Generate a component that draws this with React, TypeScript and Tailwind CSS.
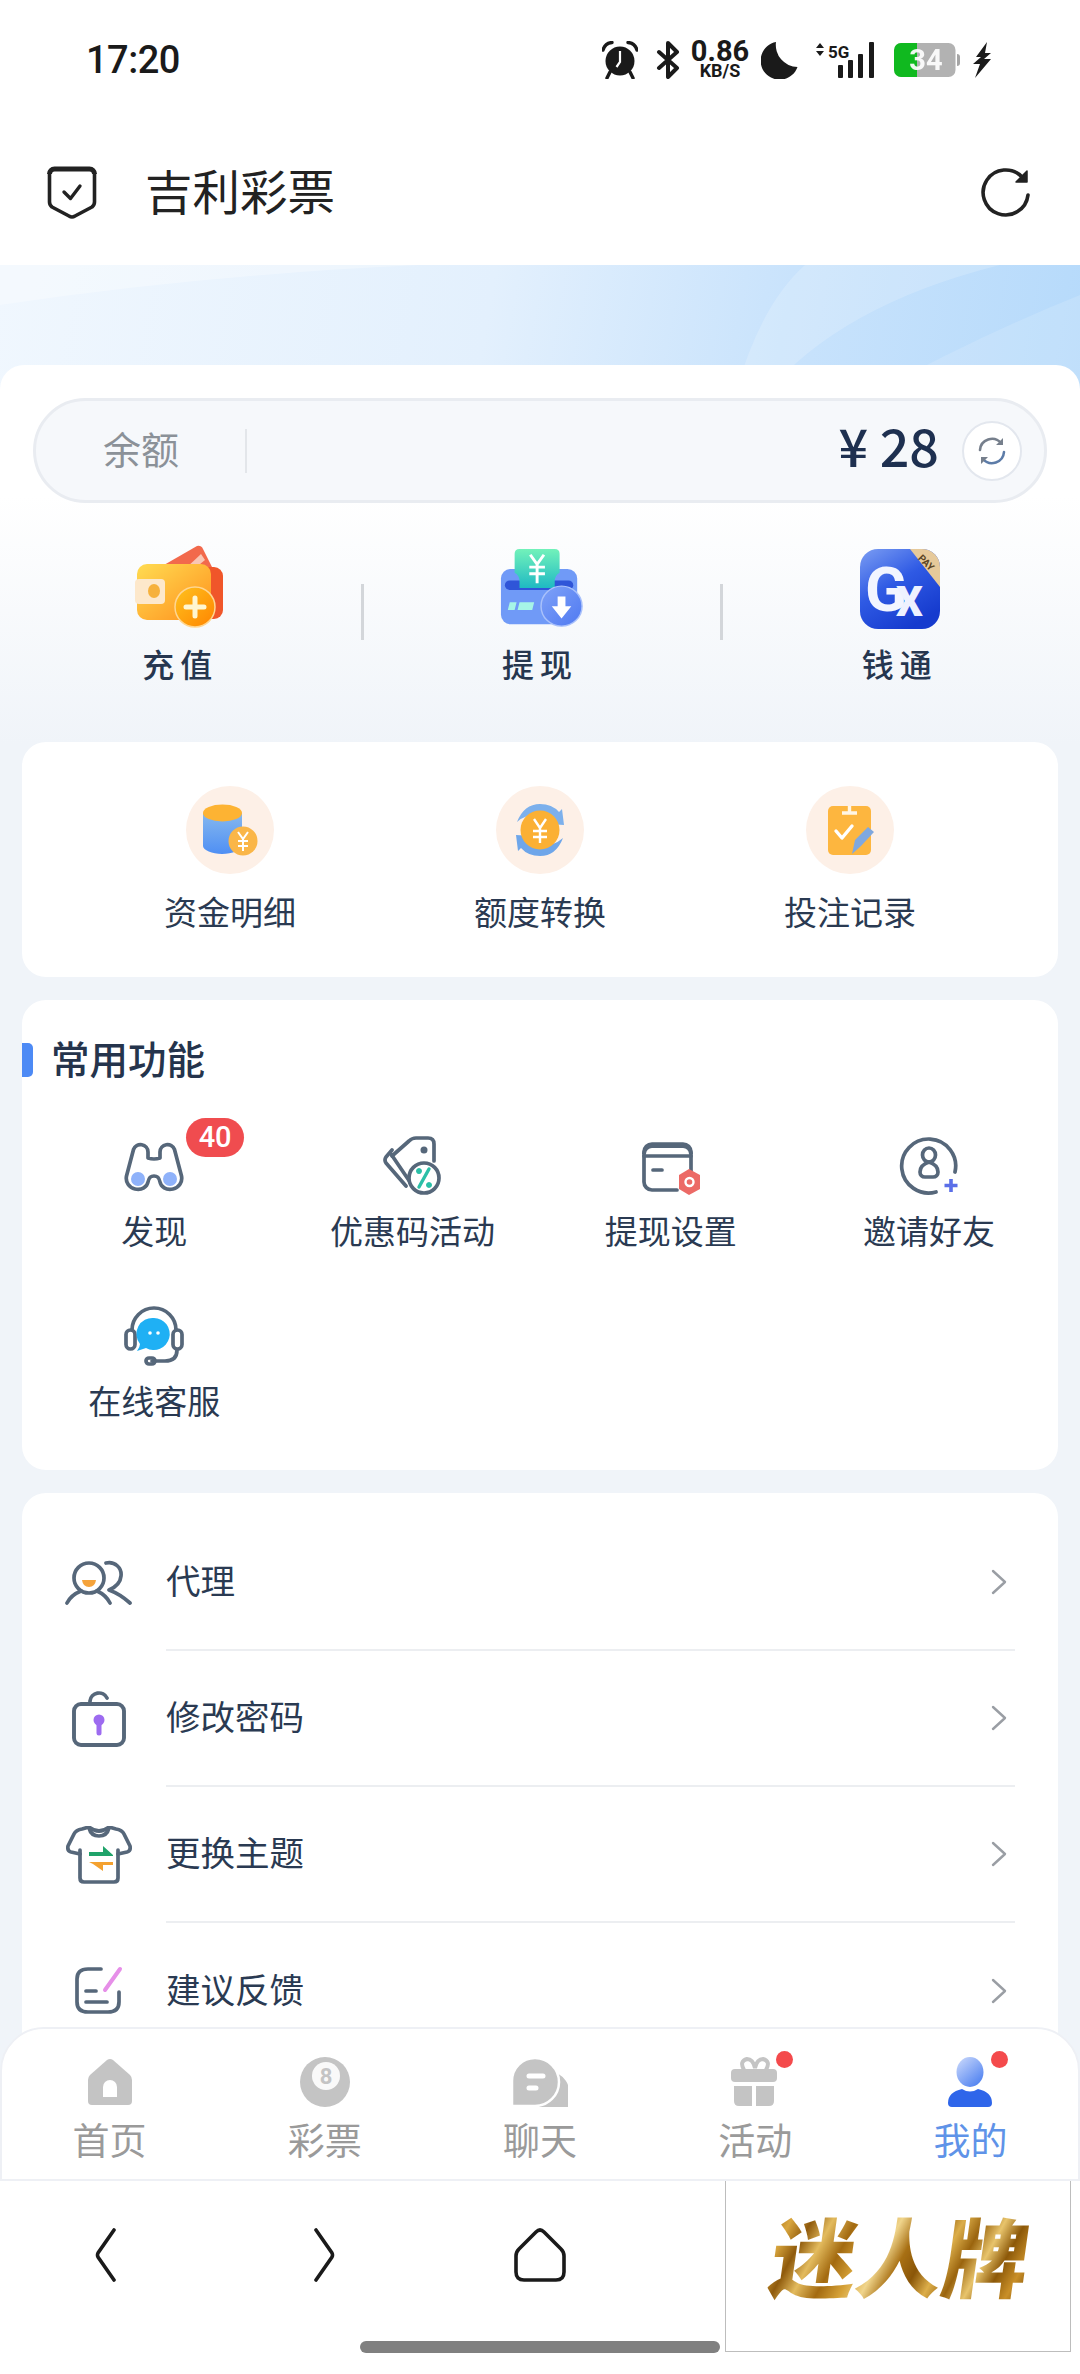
import React from "react";

const CJK = "font-['Noto_Sans_CJK_SC','Noto_Sans',sans-serif]";

function Alarm() {
  return (
    <svg width="36" height="38" viewBox="0 0 36 38">
      <circle cx="18" cy="20" r="14.5" fill="#1a1a1a" />
      <path d="M18 10v11l-3.5 5" stroke="#fff" strokeWidth="2.2" fill="none" />
      <path d="M1 9 Q3 2 10 1.5" stroke="#1a1a1a" strokeWidth="3.4" fill="none" strokeLinecap="round" />
      <path d="M35 9 Q33 2 26 1.5" stroke="#1a1a1a" strokeWidth="3.4" fill="none" strokeLinecap="round" />
      <path d="M8 31l-3 6M28 31l3 6" stroke="#1a1a1a" strokeWidth="3.4" strokeLinecap="round" />
    </svg>
  );
}

function Bluetooth() {
  return (
    <svg width="24" height="38" viewBox="0 0 24 38">
      <path d="M3 11l18 16-9 9V2l9 9L3 27" stroke="#1a1a1a" strokeWidth="4" fill="none" strokeLinejoin="round" strokeLinecap="round" />
    </svg>
  );
}

function Moon() {
  return (
    <svg width="37" height="38" viewBox="0 0 37 38">
      <path d="M15 1A19 19 0 1 0 36.500 26 A22 22 0 0 1 15 1z" fill="#1a1a1a" />
    </svg>
  );
}

function Signal() {
  return (
    <svg width="59" height="38" viewBox="0 0 59 38">
      <path d="M0 7l4-5 4 5zM0 10h8l-4 5z" fill="#1a1a1a" />
      <text x="12" y="17" fontSize="17" fontWeight="700" fontFamily="Roboto, sans-serif" fill="#1a1a1a">5G</text>
      <rect x="22" y="24" width="5" height="13" rx="1" fill="#1a1a1a" />
      <rect x="32" y="19" width="5" height="18" rx="1" fill="#1a1a1a" />
      <rect x="42" y="13" width="5" height="24" rx="1" fill="#1a1a1a" />
      <rect x="53" y="1" width="5" height="36" rx="1" fill="#1a1a1a" />
    </svg>
  );
}

function Battery() {
  return (
    <svg width="66" height="36" viewBox="0 0 66 36">
      <rect x="0.500" y="1" width="61" height="34" rx="7" fill="#b2b2b2" />
      <path d="M7 1h16v34H7a7 7 0 0 1-7-7V8a7 7 0 0 1 7-7z" fill="#10b91f" />
      <path d="M63 12a3 3 0 0 1 3 3v6a3 3 0 0 1-3 3z" fill="#a5a5a5" />
      <text x="32" y="28" textAnchor="middle" fontSize="29" fontWeight="700" fontFamily="Roboto, sans-serif" fill="#fff" opacity="0.92">34</text>
    </svg>
  );
}

function Bolt() {
  return (
    <svg width="20" height="36" viewBox="0 0 20 36">
      <path d="M15 0L4 15h5L1 22h7L3 36 19 17h-7l7-6h-6l2-11z" fill="#1a1a1a" />
    </svg>
  );
}

function StatusBar() {
  return (
    <div className="flex h-[120px] items-center justify-between bg-white pl-[86px] pr-[88px]">
      <span className="font-['Roboto',sans-serif] text-[38px] font-medium tracking-[-0.5px] text-[#1a1a1a]">17:20</span>
      <div className="flex items-center">
        <Alarm />
        <div className="ml-[18px]"><Bluetooth /></div>
        <div className="mb-[2px] ml-[9px] flex w-[62px] flex-col items-center font-['Roboto',sans-serif] font-bold text-[#1a1a1a]">
          <span className="text-[29px] leading-[23px]">0.86</span>
          <span className="text-[18px] leading-[15px]">KB/S</span>
        </div>
        <div className="ml-[10px]"><Moon /></div>
        <div className="ml-[18px]"><Signal /></div>
        <div className="ml-[19px]"><Battery /></div>
        <div className="ml-[12px]"><Bolt /></div>
      </div>
    </div>
  );
}

function Header() {
  return (
    <div className="flex h-[145px] items-center justify-between bg-white pl-[47px] pr-[48px]">
      <div className="flex items-center gap-[48px]">
        <svg width="50" height="54" viewBox="0 0 50 54">
          <path d="M2.500 8a5 5 0 0 1 5-5h35a5 5 0 0 1 5 5v28q0 3-2.500 5L28 50q-3 2-6 0L5 41q-2.500-2-2.500-5z" fill="none" stroke="#222" strokeWidth="3.600" strokeLinejoin="round" />
          <path d="M2.500 8a5 5 0 0 1 5-5h35a5 5 0 0 1 5 5" fill="none" stroke="#222" strokeWidth="5" />
          <path d="M17 26l6.500 6.500L33 20" fill="none" stroke="#222" strokeWidth="3.400" strokeLinecap="round" strokeLinejoin="round" />
        </svg>
        <span className={`${CJK} mb-[6px] text-[47.5px] leading-[60px] text-[#222]`}>吉利彩票</span>
      </div>
      <svg width="52" height="52" viewBox="0 0 52 52">
        <path d="M48 28A22.500 22.500 0 1 1 42 10" fill="none" stroke="#222" strokeWidth="3.600" strokeLinecap="round" />
        <path d="M47 4v11H36z" fill="#222" stroke="#222" strokeWidth="1.500" strokeLinejoin="round" />
      </svg>
    </div>
  );
}

function Banner() {
  return (
    <div className="h-[130px] overflow-hidden bg-[linear-gradient(100deg,#f0f7fe_0%,#e3f0fd_45%,#c9e3fc_72%,#b6dafb_100%)]">
      <svg width="1080" height="130" viewBox="0 0 1080 130">
        <path d="M735 130 Q760 40 805 0 L1000 0 Q840 40 765 130z" fill="#ffffff" opacity="0.18" />
        <path d="M870 130 Q980 70 1080 30 V130z" fill="#ffffff" opacity="0.14" />
        <path d="M0 40 Q200 10 420 0 H0z" fill="#ffffff" opacity="0.3" />
      </svg>
    </div>
  );
}

function Wallet() {
  return (
    <svg width="88" height="84" viewBox="0 0 88 84" className="mr-[6px]">
      <defs>
        <linearGradient id="wa" x1="0" y1="0" x2="1" y2="1"><stop offset="0" stopColor="#ffdc52" /><stop offset="1" stopColor="#ff8f1c" /></linearGradient>
        <linearGradient id="wb" x1="0" y1="0" x2="1" y2="1"><stop offset="0" stopColor="#ffc21e" /><stop offset="1" stopColor="#ff8400" /></linearGradient>
      </defs>
      <path d="M22 24L62 1q4-1 6 3l10 20z" fill="#f2694c" />
      <path d="M50 24L66 9l4 6-11 9z" fill="#f9c6b4" />
      <rect x="64" y="22" width="24" height="52" rx="9" fill="#f0562a" />
      <rect x="2" y="19" width="74" height="56" rx="10" fill="url(#wa)" />
      <rect x="0" y="34" width="30" height="25" rx="4" fill="#fde8cb" />
      <ellipse cx="19" cy="46" rx="6" ry="7" fill="#f6b13c" />
      <circle cx="60" cy="62" r="20" fill="url(#wb)" stroke="#ffd691" strokeWidth="1.500" />
      <path d="M60 53v18M51 62h18" stroke="#fff6d0" strokeWidth="5" strokeLinecap="round" />
    </svg>
  );
}

function Withdraw() {
  return (
    <svg width="86" height="80" viewBox="0 0 88 84" preserveAspectRatio="none">
      <defs>
        <linearGradient id="wd" x1="0" y1="0" x2="0" y2="1"><stop offset="0" stopColor="#72f2ba" /><stop offset="1" stopColor="#1fb9c3" /></linearGradient>
        <linearGradient id="wc" x1="0" y1="0" x2="1" y2="1"><stop offset="0" stopColor="#7fa2f8" /><stop offset="1" stopColor="#4f79f1" /></linearGradient>
      </defs>
      <rect x="2" y="21" width="78" height="58" rx="10" fill="#709af7" />
      <rect x="6" y="33" width="70" height="10" rx="5" fill="#2f55d8" />
      <path d="M16 5q0-5 5-5h36q5 0 5 5v20q-5 3-5 9v7H21v-7q0-6-5-9z" fill="url(#wd)" />
      <path d="M32 6l7 10 7-10M39 16v20M31 19h16M31 26h16" stroke="#fff" strokeWidth="3" fill="none" />
      <path d="M11 56h7l-2 8H9zM21 56h15l-2 8H19z" fill="#a6f5e7" />
      <circle cx="64" cy="60" r="21" fill="url(#wc)" stroke="#a9c1fb" strokeWidth="1.500" />
      <path d="M60 50h8v10h6L64 73 54 60h6z" fill="#fff" />
    </svg>
  );
}

function QianTong() {
  return (
    <svg width="80" height="80" viewBox="0 0 80 80" className="mr-[4px]">
      <defs>
        <linearGradient id="qt" x1="0" y1="0" x2="0.600" y2="1"><stop offset="0" stopColor="#7b9df3" /><stop offset="0.500" stopColor="#2f5ae4" /><stop offset="1" stopColor="#163bce" /></linearGradient>
      </defs>
      <rect width="80" height="80" rx="18" fill="url(#qt)" />
      <path d="M50 0h12a18 18 0 0 1 18 18v20z" fill="#e6c99a" />
      <text x="66" y="17" textAnchor="middle" fontSize="10" fontWeight="700" fontFamily="Roboto, sans-serif" fill="#5b4423" transform="rotate(45 66 14)">PAY</text>
      <text x="5" y="62" fontSize="62" fontWeight="700" fontFamily="Roboto, sans-serif" fill="#f2f5ff">G</text>
      <text x="36" y="67" fontSize="42" fontWeight="900" fontFamily="Roboto, sans-serif" fill="#eef2ff">X</text>
    </svg>
  );
}

function Funds() {
  return (
    <svg width="88" height="88" viewBox="0 0 88 88">
      <defs>
        <linearGradient id="fa" x1="0" y1="0" x2="0" y2="1"><stop offset="0" stopColor="#86b8ee" /><stop offset="1" stopColor="#4f8ff4" /></linearGradient>
      </defs>
      <circle cx="44" cy="44" r="44" fill="#fdf0e7" />
      <path d="M17 27v33c0 4 9 8 19 8s20-4 20-8V27z" fill="url(#fa)" />
      <ellipse cx="36.500" cy="27" rx="19.500" ry="8.500" fill="#fdb333" />
      <circle cx="57" cy="55" r="14.500" fill="#fab648" />
      <path d="M52 46l5 7 5-7M57 53v12M52 55h10M52 60h10" stroke="#fff" strokeWidth="2" fill="none" />
    </svg>
  );
}

function Exchange() {
  return (
    <svg width="88" height="88" viewBox="0 0 88 88">
      <circle cx="44" cy="44" r="44" fill="#fdf0e7" />
      <path d="M21 36Q28 18 44 18q12 0 19 8l3-3 2 16-16-1 4-4q-4-6-12-6-14 0-23 8z" fill="#7cb0ec" />
      <path d="M67 52Q60 70 44 70q-12 0-19-8l-3 3-2-16 16 1-4 4q4 6 12 6 14 0 23-8z" fill="#6ea6ea" />
      <circle cx="44" cy="44" r="19.500" fill="#fbb034" />
      <path d="M38 33l6 9 6-9M44 42v15M37 45h14M37 51h14" stroke="#fff" strokeWidth="2.400" fill="none" />
    </svg>
  );
}

function Record() {
  return (
    <svg width="88" height="88" viewBox="0 0 88 88">
      <circle cx="44" cy="44" r="44" fill="#fdf0e7" />
      <rect x="22" y="20" width="43" height="49" rx="5" fill="#fdb63f" />
      <path d="M36 27h15M43.500 20v7" stroke="#fff6e6" strokeWidth="3.400" />
      <path d="M30 45l6 7 10-12" stroke="#fff" strokeWidth="3.400" fill="none" strokeLinecap="round" strokeLinejoin="round" />
      <path d="M46 68l3-14 13-13 6 5-13 14z" fill="#7fa8df" />
    </svg>
  );
}

const stroke = { fill: "none", stroke: "#56677a", strokeWidth: 3.7, strokeLinecap: "round", strokeLinejoin: "round" } as const;

function Binoculars() {
  return (
    <svg width="60" height="60" viewBox="0 0 60 60">
      <path {...stroke} d="M24 22v-6A7.500 7.500 0 0 0 9.500 13.500L2.500 40a11 11 0 0 0 8.500 13c7 1.500 12-2 13-7 .8-4 2-6 6-6s5.200 2 6 6c1 5 6 8.500 13 7a11 11 0 0 0 8.500-13L50.500 13.500A7.500 7.500 0 0 0 36 16v6q-6 2-12 0z" />
      <circle cx="14" cy="43" r="7" fill="#8fb2fa" />
      <circle cx="46" cy="43" r="7" fill="#8fb2fa" />
    </svg>
  );
}

function Tag() {
  return (
    <svg width="60" height="60" viewBox="0 0 60 60">
      <path {...stroke} d="M24 50L4 27q-2-3 0-6l6-7" />
      <path {...stroke} d="M10 20L27 5q3-3 7-3h12q6 0 6 6v17" />
      <path {...stroke} d="M9 18l19 28" />
      <circle cx="42" cy="14" r="3.500" fill="#56677a" />
      <circle {...stroke} cx="42" cy="42" r="15" fill="#fff" />
      <path d="M37 33a2 2 0 1 0 .01 0M47 47a2 2 0 1 0 .01 0" fill="#2bbfa7" stroke="#2bbfa7" strokeWidth="2" />
      <path d="M47 33L37 51" stroke="#2bbfa7" strokeWidth="3.400" strokeLinecap="round" />
    </svg>
  );
}

function CardSet() {
  return (
    <svg width="60" height="60" viewBox="0 0 60 60">
      <path {...stroke} d="M36 54H11a8 8 0 0 1-8-8V16a8 8 0 0 1 8-8h31a8 8 0 0 1 8 8v19" />
      <path d="M3 18a8 8 0 0 1 8-8h31a8 8 0 0 1 8 8" stroke="#56677a" strokeWidth="4" fill="none" />
      <path {...stroke} d="M3 20h47M12 34h9" />
      <path d="M48 33l11 6v14l-11 6-10-6V39z" fill="#ec6a66" />
      <circle cx="48.500" cy="46" r="4" fill="none" stroke="#fff" strokeWidth="2.400" />
    </svg>
  );
}

function Invite() {
  return (
    <svg width="60" height="60" viewBox="0 0 60 60">
      <path {...stroke} d="M56 36A27 27 0 1 0 37 56" />
      <ellipse {...stroke} cx="30" cy="19" rx="6.500" ry="7" />
      <path {...stroke} d="M30 26c-6 2-9 6-9 10 0 3 2 5 5 5h8c3 0 5-2 5-5 0-4-3-8-9-10z" />
      <path d="M52 43v13M45.500 49.500h13" stroke="#5b6fe8" strokeWidth="3.600" />
    </svg>
  );
}

function Support() {
  return (
    <svg width="60" height="60" viewBox="0 0 60 60">
      <path {...stroke} d="M8 24a22 22 0 0 1 44 0" />
      <rect {...stroke} x="2" y="24" width="9" height="19" rx="4.500" />
      <rect {...stroke} x="49" y="24" width="9" height="19" rx="4.500" />
      <path {...stroke} d="M53 44q0 11-12 11H28" />
      <rect {...stroke} x="22" y="52" width="9" height="6" rx="3" />
      <path d="M30 12a16 16 0 1 1-8 30l-9 3q3-4 3-7a16 16 0 0 1 14-26z" fill="#1fb0f4" />
      <circle cx="26" cy="27" r="1.800" fill="#fff" />
      <circle cx="34" cy="27" r="1.800" fill="#fff" />
    </svg>
  );
}

function Agent() {
  return (
    <svg width="68" height="46" viewBox="0 0 68 46">
      <circle {...stroke} cx="24" cy="18" r="15" />
      <path d="M17 20h14q-1 7-7 7t-7-7z" fill="#f5a33b" />
      <path {...stroke} d="M2 43q4-8 14-12M45 43q-4-8-13-12" />
      <path {...stroke} d="M41 3c9-2 16 5 15 13-.5 6-5 11-12 14q11 4 21 13" />
    </svg>
  );
}

function Lock() {
  return (
    <svg width="54" height="56" viewBox="0 0 54 56">
      <rect {...stroke} x="2" y="13" width="50" height="41" rx="7" strokeWidth="3.900" />
      <path {...stroke} d="M18 12V10a9 9 0 0 1 17-3" />
      <circle cx="27" cy="29" r="5.500" fill="#9d6bf0" />
      <path d="M27 30v12" stroke="#9d6bf0" strokeWidth="5" strokeLinecap="round" />
    </svg>
  );
}

function Shirt() {
  return (
    <svg width="66" height="58" viewBox="0 0 66 58">
      <path {...stroke} d="M14 24v28q0 4 4 4h30q4 0 4-4V24" />
      <path {...stroke} d="M14 28L5 26q-4-1-3-6L8 8q2-4 8-5l7-2q10 8 20 0l7 2q6 1 8 5l6 12q1 5-3 6l-9 2" />
      <path {...stroke} d="M23 2q2 8 10 8t10-8" />
      <path d="M23 26h14v-6l10 9v1H23z" fill="#1fa36a" />
      <path d="M23 36h24v3H37v6l-10-7z" fill="#f4a12f" />
    </svg>
  );
}

function Feedback() {
  return (
    <svg width="50" height="50" viewBox="0 0 50 50">
      <path {...stroke} d="M27 3H14Q3 3 3 13v23q0 10 11 10h20q11 0 11-10V26" />
      <path d="M31 24L46 3" stroke="#e68fe8" strokeWidth="4" strokeLinecap="round" />
      <path {...stroke} d="M12 25h10M12 36h21" />
    </svg>
  );
}

function Chevron() {
  return (
    <svg width="17" height="26" viewBox="0 0 17 26">
      <path d="M2 2l12 11L2 24" fill="none" stroke="#9a9ea4" strokeWidth="2.400" strokeLinecap="round" strokeLinejoin="round" />
    </svg>
  );
}

function Balance() {
  return (
    <div className="mx-[33px] flex h-[105px] items-center rounded-full border-[3px] border-[#e9ecf1] bg-[#f6f8fb] pl-[67px] pr-[22px]">
      <span className={`${CJK} mb-[6px] text-[38px] leading-[50px] text-[#8b9198]`}>余额</span>
      <div className="ml-[66px] h-[44px] w-[2px] bg-[#e3e6ea]" />
      <span className={`${CJK} mb-[12px] ml-auto text-[52px] font-medium leading-[60px] text-[#1e3050]`}>¥ 28</span>
      <div className="ml-[23px] flex h-[60px] w-[60px] items-center justify-center rounded-full border-[2px] border-[#e3e7ee] bg-white">
        <svg width="32" height="32" viewBox="0 0 32 32">
          <path d="M4 15A12 12 0 0 1 25 8" fill="none" stroke="#767f8c" strokeWidth="2.600" strokeLinecap="round" />
          <path d="M28 17A12 12 0 0 1 7 24" fill="none" stroke="#5d7ca8" strokeWidth="2.600" strokeLinecap="round" />
          <path d="M27 3v7h-7zM5 29v-7h7z" fill="#767f8c" />
        </svg>
      </div>
    </div>
  );
}

function Action({ icon, label }: { icon: React.ReactNode; label: string }) {
  return (
    <div className="flex flex-1 flex-col items-center">
      <div className="flex h-[84px] items-end justify-center">{icon}</div>
      <span className={`${CJK} mr-[4px] mt-[12px] text-[32px] font-medium leading-[44px] tracking-[6px] text-[#26364f]`}>{label}</span>
    </div>
  );
}

function Actions() {
  return (
    <div className="mt-[42px] flex pl-[4px]">
      <Action icon={<Wallet />} label="充值" />
      <div className="mt-[39px] h-[56px] w-[3px] bg-[#d3d6da]" />
      <Action icon={<Withdraw />} label="提现" />
      <div className="mt-[39px] h-[56px] w-[3px] bg-[#d3d6da]" />
      <Action icon={<QianTong />} label="钱通" />
    </div>
  );
}

function Ledger() {
  const items = [
    { icon: <Funds />, label: "资金明细" },
    { icon: <Exchange />, label: "额度转换" },
    { icon: <Record />, label: "投注记录" },
  ];
  return (
    <div className="mx-[22px] mt-[57px] grid h-[235px] grid-cols-3 rounded-[24px] bg-white px-[53px] pt-[44px]">
      {items.map((it) => (
        <div key={it.label} className="flex flex-col items-center">
          {it.icon}
          <span className={`${CJK} mt-[15px] text-[33px] leading-[44px] text-[#2a3a52]`}>{it.label}</span>
        </div>
      ))}
    </div>
  );
}

function Tool({ icon, label, badge }: { icon: React.ReactNode; label: string; badge?: string }) {
  return (
    <div className="flex flex-col items-center">
      <div className="relative h-[60px] w-[60px]">
        {icon}
        {badge && (
          <span className="absolute left-[62px] top-[-18px] flex h-[39px] w-[58px] items-center justify-center rounded-[20px] bg-[#f04c4f] font-['Roboto',sans-serif] text-[29px] font-medium text-white">
            {badge}
          </span>
        )}
      </div>
      <span className={`${CJK} mt-[12px] text-[33px] leading-[44px] text-[#2a3a52]`}>{label}</span>
    </div>
  );
}

function Tools() {
  return (
    <div className="relative mx-[22px] mt-[23px] h-[470px] rounded-[24px] bg-white pt-[35px]">
      <div className="flex h-[50px] items-center">
        <div className="h-[34px] w-[11px] rounded-r-[5px] bg-[#4d8af5]" />
        <span className={`${CJK} mb-[7px] ml-[18px] text-[38.5px] font-medium leading-[50px] text-[#25344c]`}>常用功能</span>
      </div>
      <div className="mt-[51px] grid grid-cols-4 gap-y-[54px] pl-[3px]">
        <Tool icon={<Binoculars />} label="发现" badge="40" />
        <Tool icon={<Tag />} label="优惠码活动" />
        <Tool icon={<CardSet />} label="提现设置" />
        <Tool icon={<Invite />} label="邀请好友" />
        <Tool icon={<Support />} label="在线客服" />
      </div>
    </div>
  );
}

function Row({ icon, label, last }: { icon: React.ReactNode; label: string; last?: boolean }) {
  return (
    <div className="flex h-[136px] items-center">
      <div className="flex w-[144px] justify-center pl-[10px] pr-[1px]">{icon}</div>
      <div className={`flex h-full flex-1 items-center justify-between pr-[7px] ${last ? "" : "border-b-[2px] border-[#eceef1]"}`}>
        <span className={`${CJK} mb-[6px] text-[34.5px] leading-[46px] text-[#2a3a52]`}>{label}</span>
        <Chevron />
      </div>
    </div>
  );
}

function Menu() {
  return (
    <div className="mx-[22px] mt-[23px] rounded-[24px] bg-white pb-[24px] pr-[43px] pt-[22px]">
      <Row icon={<Agent />} label="代理" />
      <Row icon={<Lock />} label="修改密码" />
      <Row icon={<Shirt />} label="更换主题" />
      <Row icon={<Feedback />} label="建议反馈" last />
    </div>
  );
}

const grey = "#c4c4c4";

function TabIcon({ kind }: { kind: string }) {
  if (kind === "home")
    return (
      <svg width="50" height="50" viewBox="0 0 50 50">
        <path d="M22 3q3-2 6 0l17 15q2 2 2 5v21q0 4-4 4H7q-4 0-4-4V23q0-3 2-5z" fill={grey} />
        <path d="M18 40V30a7 7 0 0 1 14 0v10z" fill="#fff" />
      </svg>
    );
  if (kind === "ball")
    return (
      <svg width="52" height="52" viewBox="0 0 52 52">
        <circle cx="26" cy="26" r="25" fill={grey} />
        <circle cx="27" cy="20" r="14" fill="#fff" opacity="0.9" />
        <text x="27" y="28" textAnchor="middle" fontSize="22" fontWeight="700" fontFamily="Roboto, sans-serif" fill={grey}>8</text>
      </svg>
    );
  if (kind === "chat")
    return (
      <svg width="56" height="50" viewBox="0 0 56 50">
        <path d="M36 14a22 22 0 0 1 20 30v6H20z" fill={grey} />
        <path d="M23 1a23 23 0 0 1 0 48H0V24A23 23 0 0 1 23 1z" fill={grey} stroke="#fff" strokeWidth="2.500" />
        <path d="M17 19h14M17 31h7" stroke="#fff" strokeWidth="5" strokeLinecap="round" />
      </svg>
    );
  if (kind === "gift")
    return (
      <svg width="50" height="50" viewBox="0 0 50 50">
        <path d="M14 13q-5-9 3-11 6 0 8 9 2-9 8-9 8 2 3 11" fill="none" stroke={grey} strokeWidth="4" />
        <rect x="1" y="12" width="46" height="13" rx="4" fill={grey} />
        <path d="M4 29h18v20H9q-5 0-5-5zM26 29h18v15q0 5-5 5H26z" fill={grey} />
      </svg>
    );
  return (
    <svg width="46" height="50" viewBox="0 0 46 50">
      <defs>
        <linearGradient id="ua" x1="0" y1="0" x2="0.800" y2="1"><stop offset="0" stopColor="#cfdcfc" /><stop offset="1" stopColor="#4d80f0" /></linearGradient>
      </defs>
      <ellipse cx="23" cy="15" rx="13.500" ry="15" fill="url(#ua)" />
      <path d="M15 32q8 5 16 0 14 3 14 14 0 4-4 4H5q-4 0-4-4 0-11 14-14z" fill="#2f66ea" />
    </svg>
  );
}

function TabBar() {
  const tabs = [
    { kind: "home", label: "首页" },
    { kind: "ball", label: "彩票" },
    { kind: "chat", label: "聊天" },
    { kind: "gift", label: "活动", dot: true },
    { kind: "me", label: "我的", dot: true, active: true },
  ];
  return (
    <div className="relative z-10 -mt-[30px] grid h-[154px] grid-cols-5 rounded-t-[44px] border-x-[2px] border-y-[2px] border-[#eef0f5] bg-white pt-[27px]">
      {tabs.map((t) => (
        <div key={t.label} className="flex flex-col items-center">
          <div className="relative flex h-[52px] w-[56px] items-center justify-center">
            <TabIcon kind={t.kind} />
            {t.dot && <span className="absolute right-[-10px] top-[-5px] h-[17px] w-[17px] rounded-full bg-[#f44a4c]" />}
          </div>
          <span className={`${CJK} mt-[9px] text-[37px] leading-[44px] ${t.active ? "text-[#5f93e8]" : "text-[#9a9a9a]"}`}>{t.label}</span>
        </div>
      ))}
    </div>
  );
}

function NavBar() {
  return (
    <div className="relative flex h-[193px] flex-col bg-white pt-[47px]">
      <div className="grid h-[52px] grid-cols-5">
        <div className="flex justify-center pr-[4px]">
          <svg width="26" height="54" viewBox="0 0 26 54">
            <path d="M21 2L5 25q-1 2 0 4l16 23" fill="none" stroke="#1a1a1a" strokeWidth="3.600" strokeLinecap="round" />
          </svg>
        </div>
        <div className="flex justify-center">
          <svg width="26" height="54" viewBox="0 0 26 54">
            <path d="M5 2l16 23q1 2 0 4L5 52" fill="none" stroke="#1a1a1a" strokeWidth="3.600" strokeLinecap="round" />
          </svg>
        </div>
        <div className="flex justify-center">
          <svg width="52" height="54" viewBox="0 0 52 54">
            <path d="M22 4q4-4 8 0l17 17q3 3 3 7v16q0 8-8 8H10q-8 0-8-8V28q0-4 3-7z" fill="none" stroke="#1a1a1a" strokeWidth="3.600" strokeLinejoin="round" />
          </svg>
        </div>
      </div>
      <div className="mt-[61px] flex justify-center">
        <div className="h-[12px] w-[360px] rounded-full bg-[#808080]" />
      </div>
      <div className="absolute bottom-[22px] right-[9px] flex h-[190px] w-[346px] items-center justify-center border border-[#bdbdbd] bg-white pl-[6px]">
        <span className={`${CJK} mb-[6px] skew-x-[-8deg] bg-[linear-gradient(112deg,#a86f14_0%,#d9a63e_7%,#8f5a0c_14%,#e3bb5e_21%,#a36a10_29%,#d6a238_37%,#f0d58c_44%,#a87014_51%,#8a5608_58%,#dcae4a_65%,#9a640e_72%,#e8c46c_79%,#8c5808_86%,#c98f28_93%,#7f4f06_100%)] bg-clip-text text-[86px] font-black leading-[100px] text-transparent`}>
          迷人牌
        </span>
      </div>
    </div>
  );
}

export default function App() {
  return (
    <div className="flex h-[2374px] w-[1080px] flex-col overflow-hidden bg-[#f0f4f9]">
      <StatusBar />
      <Header />
      <Banner />
      <div className="relative -mt-[30px] min-h-0 flex-1 overflow-hidden rounded-t-[24px] bg-[linear-gradient(180deg,#ffffff_0px,#ffffff_130px,#f0f4f9_380px)] pt-[33px]">
        <Balance />
        <Actions />
        <Ledger />
        <Tools />
        <Menu />
      </div>
      <TabBar />
      <NavBar />
    </div>
  );
}
